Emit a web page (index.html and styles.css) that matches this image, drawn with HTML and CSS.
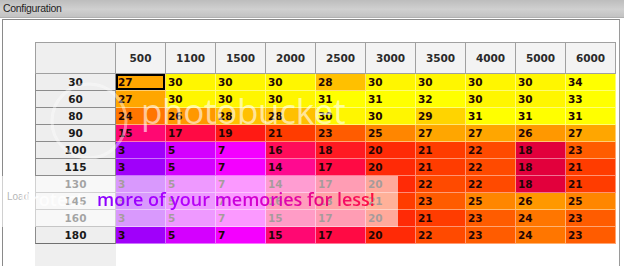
FILE: index.html
```html
<!DOCTYPE html>
<html>
<head>
<meta charset="utf-8">
<link rel="stylesheet" href="styles.css">
</head>
<body>
<div class="titlebar">Configuration</div>
<div class="panel">
  <div class="side"><span class="load">Load</span></div>
  <div class="tablewrap">
    <div class="grid">
      <div class="corner"></div>
      <div class="ch">500</div><div class="ch">1100</div><div class="ch">1500</div><div class="ch">2000</div><div class="ch">2500</div><div class="ch">3000</div><div class="ch">3500</div><div class="ch">4000</div><div class="ch">5000</div><div class="ch">6000</div>

      <div class="rh">30</div>
      <div class="c v27 sel">27</div><div class="c v30">30</div><div class="c v30">30</div><div class="c v30">30</div><div class="c v28">28</div><div class="c v30">30</div><div class="c v30">30</div><div class="c v30">30</div><div class="c v30">30</div><div class="c v34">34</div>

      <div class="rh">60</div>
      <div class="c v27">27</div><div class="c v30">30</div><div class="c v30">30</div><div class="c v30">30</div><div class="c v31">31</div><div class="c v31">31</div><div class="c v32">32</div><div class="c v30">30</div><div class="c v30">30</div><div class="c v33">33</div>

      <div class="rh">80</div>
      <div class="c v24">24</div><div class="c v26">26</div><div class="c v28">28</div><div class="c v28">28</div><div class="c v30">30</div><div class="c v30">30</div><div class="c v29">29</div><div class="c v31">31</div><div class="c v31">31</div><div class="c v31">31</div>

      <div class="rh">90</div>
      <div class="c v15">15</div><div class="c v17">17</div><div class="c v19">19</div><div class="c v21">21</div><div class="c v23">23</div><div class="c v25">25</div><div class="c v27">27</div><div class="c v27">27</div><div class="c v26">26</div><div class="c v27">27</div>

      <div class="rh">100</div>
      <div class="c v3">3</div><div class="c v5">5</div><div class="c v7">7</div><div class="c v16">16</div><div class="c v18">18</div><div class="c v20">20</div><div class="c v21">21</div><div class="c v22">22</div><div class="c v18 alt">18</div><div class="c v23">23</div>

      <div class="rh">115</div>
      <div class="c v3">3</div><div class="c v5">5</div><div class="c v7">7</div><div class="c v14">14</div><div class="c v17">17</div><div class="c v20">20</div><div class="c v21">21</div><div class="c v22">22</div><div class="c v18 alt">18</div><div class="c v21">21</div>

      <div class="rh">130</div>
      <div class="c v3">3</div><div class="c v5">5</div><div class="c v7">7</div><div class="c v14">14</div><div class="c v17">17</div><div class="c v20">20</div><div class="c v22">22</div><div class="c v22">22</div><div class="c v18 alt">18</div><div class="c v21">21</div>

      <div class="rh">145</div>
      <div class="c v3">3</div><div class="c v5">5</div><div class="c v7">7</div><div class="c v16">16</div><div class="c v18">18</div><div class="c v21">21</div><div class="c v23">23</div><div class="c v25">25</div><div class="c v26">26</div><div class="c v25">25</div>

      <div class="rh">160</div>
      <div class="c v3">3</div><div class="c v5">5</div><div class="c v7">7</div><div class="c v15">15</div><div class="c v17">17</div><div class="c v20">20</div><div class="c v21">21</div><div class="c v23">23</div><div class="c v24">24</div><div class="c v23">23</div>

      <div class="rh last">180</div>
      <div class="c v3">3</div><div class="c v5">5</div><div class="c v7">7</div><div class="c v15">15</div><div class="c v17">17</div><div class="c v20">20</div><div class="c v22">22</div><div class="c v23">23</div><div class="c v24">24</div><div class="c v23">23</div>
    </div>
    <div class="filler"></div>
  </div>
</div>

<svg class="pb-ring" width="90" height="90" viewBox="0 0 90 90"><circle cx="45" cy="45" r="37" fill="none" stroke="#fff" stroke-width="3"/></svg>
<div class="pb-word">photobucket</div>
<div class="band"><span class="protect">Protect</span><span class="slogan">more of your memories for less!</span></div>
</body>
</html>
```

FILE: styles.css
```css
html, body {
  margin: 0;
  padding: 0;
}
body {
  width: 624px;
  height: 266px;
  overflow: hidden;
  background: #ffffff;
  position: relative;
  display: flex;
  flex-direction: column;
  font-family: "Liberation Sans", Arial, sans-serif;
}
.titlebar {
  height: 17px;
  flex: none;
  background: linear-gradient(180deg, #bdbdbd 0%, #d0d0d0 55%, #c2c2c2 100%);
  font-size: 10.5px;
  letter-spacing: -0.3px;
  line-height: 17px;
  padding-left: 3px;
  color: #1e1e1e;
  border-bottom: 1px solid #b0b0b0;
}
.panel {
  flex: 1;
  margin: 1px 4px 0 2px;
  border-left: 1px solid #8a8a8a;
  border-top: 1px solid #8a8a8a;
  border-right: 1px solid #9a9a9a;
  display: flex;
  padding-top: 22px;
}
.side {
  width: 32px;
  flex: none;
  position: relative;
}
.load {
  position: absolute;
  left: 4px;
  top: 149px;
  font-size: 10px;
  color: #444;
}
.tablewrap {
  display: flex;
  flex-direction: column;
}
.grid {
  display: grid;
  grid-template-columns: 81px repeat(10, 50px);
  grid-template-rows: 32px repeat(10, 17px);
  font-family: Tahoma, "DejaVu Sans", sans-serif;
  font-weight: bold;
  font-size: 10.5px;
}
.corner {
  background: #efefef;
  border: 1px solid #a0a0a0;
}
.ch {
  background: #f3f3f3;
  border-top: 1px solid #a0a0a0;
  border-right: 1px solid #a0a0a0;
  border-bottom: 1px solid #a0a0a0;
  display: flex;
  align-items: center;
  justify-content: center;
  color: #2a2a2a;
}
.rh {
  background: #eeeeee;
  border-left: 1px solid #8c8c8c;
  border-right: 1px solid #8c8c8c;
  border-bottom: 1px solid #8c8c8c;
  display: flex;
  align-items: center;
  justify-content: center;
  color: #1a1a1a;
}
.rh.last {
  border-top: 1px solid #707070;
  border-bottom: 1px solid #707070;
  margin-top: -1px;
}
.c {
  border-right: 1px solid rgba(255, 255, 255, 0.45);
  border-bottom: 1px solid rgba(255, 255, 255, 0.45);
  padding-left: 2px;
  line-height: 16px;
  color: #1e0606;
}
.c.sel {
  box-shadow: inset 0 0 0 2px #000;
}
.filler {
  width: 81px;
  flex: 1;
  background: #efefef;
}

.v3 { background: #a000fa; }
.v5 { background: #d400ff; }
.v7 { background: #f400ff; }
.v14 { background: #ff0a90; }
.v15 { background: #ff0872; }
.v16 { background: #ff0c5a; }
.v17 { background: #ff0a44; }
.v18 { background: #ff1a22; }
.v18.alt { background: #e2003c; }
.v19 { background: #ff1a14; }
.v20 { background: #ff2a06; }
.v21 { background: #ff3c00; }
.v22 { background: #ff4a00; }
.v23 { background: #ff5c00; }
.v24 { background: #ff7600; }
.v25 { background: #ff8600; }
.v26 { background: #ff9800; }
.v27 { background: #ffa600; }
.v28 { background: #ffc000; }
.v29 { background: #ffd400; }
.v30 { background: #fff600; }
.v31, .v32, .v33, .v34 { background: #ffff00; }

/* watermark overlay */
.pb-ring {
  position: absolute;
  left: 44px;
  top: 76px;
  opacity: 0.4;
}
.pb-word {
  position: absolute;
  left: 141px;
  top: 86px;
  font-family: "Open Sans", sans-serif;
  font-size: 35px;
  line-height: 50px;
  color: rgba(255, 255, 255, 0.6);
  letter-spacing: -0.3px;
}
.band {
  position: absolute;
  left: 0;
  top: 176px;
  width: 398px;
  height: 51px;
  background: rgba(255, 255, 255, 0.6);
  font-family: "Open Sans", sans-serif;
  font-weight: 600;
  font-size: 18px;
  line-height: 47px;
  white-space: nowrap;
  padding-left: 20px;
  box-sizing: border-box;
}
.protect {
  display: inline-block;
  width: 77px;
  color: rgba(255, 255, 255, 0.75);
}
.slogan {
  background: linear-gradient(90deg, #8a00ff 0%, #b000ff 30%, #d800c8 60%, #ff1040 100%);
  -webkit-background-clip: text;
  background-clip: text;
  color: transparent;
}
```
